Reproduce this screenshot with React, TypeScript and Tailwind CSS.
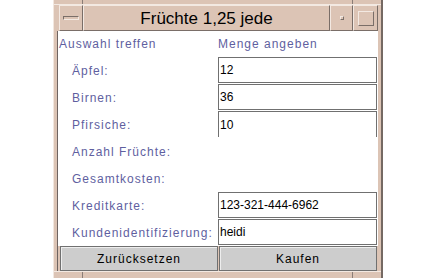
export default function App() {
  const font = "font-['Liberation_Sans',Arial,sans-serif]";
  const raised =
    "border border-t-[#f3e9e2] border-l-[#f3e9e2] border-b-[#7a6e68] border-r-[#7a6e68]";
  const label = "text-[12px] tracking-[1px] text-[#5f5f9f] leading-none";
  const field =
    "w-[159px] h-[26px] border border-[#707070] bg-white text-[12px] text-black leading-none flex items-center pl-[1px]";
  const button =
    "w-[158px] h-[25px] bg-[#cdcdcd] border border-[#707070] shadow-[inset_1px_1px_0_#eeeeee] text-[12px] tracking-[1px] text-black flex items-center justify-center leading-none";

  const rows: { label: string; value?: string; clipped?: boolean }[] = [
    { label: "Äpfel:", value: "12" },
    { label: "Birnen:", value: "36" },
    { label: "Pfirsiche:", value: "10", clipped: true },
    { label: "Anzahl Früchte:" },
    { label: "Gesamtkosten:" },
    { label: "Kreditkarte:", value: "123-321-444-6962" },
    { label: "Kundenidentifizierung:", value: "heidi" },
  ];

  return (
    <div className={`w-[431px] h-[278px] bg-white flex overflow-hidden ${font}`}>
      <div className="ml-[53px] w-[330px] h-[278px] bg-[#dcc4b5] border-l border-l-[#f2e7df] border-r-2 border-r-[#756963] flex flex-col">
        {/* top frame strip */}
        <div className="h-[5px] flex border-b border-b-[#f3e9e2]">
          <div className="w-[29px] border-r border-r-[#8a7d77]" />
          <div className="flex-1" />
          <div className="w-[29px] border-l border-l-[#8a7d77]" />
        </div>
        {/* title bar */}
        <div className="h-[26px] flex">
          <div className="w-[5px]" />
          <div className={`w-[24px] h-[26px] ${raised} flex items-center justify-center`}>
            <div className="w-[16px] h-[4px] border border-t-[#7a6e68] border-l-[#7a6e68] border-b-[#f3e9e2] border-r-[#f3e9e2]" />
          </div>
          <div className={`w-[247px] h-[26px] ${raised} flex items-center justify-center text-[17px] text-black leading-none`}>
            Früchte 1,25 jede
          </div>
          <div className={`w-[23px] h-[26px] ${raised} flex items-center justify-center`}>
            <div className="w-[4px] h-[4px] border border-t-[#f3e9e2] border-l-[#f3e9e2] border-b-[#7a6e68] border-r-[#7a6e68]" />
          </div>
          <div className={`w-[25px] h-[26px] ${raised} flex items-center justify-center`}>
            <div className="w-[16px] h-[15px] border border-t-[#f3e9e2] border-l-[#f3e9e2] border-b-[#7a6e68] border-r-[#7a6e68]" />
          </div>
        </div>
        {/* content */}
        <div className="flex">
          <div className="w-[3px]" />
          <div className="w-[321px] border-l border-l-[#6e6461] bg-white flex flex-col">
            <div className="h-[26px] flex items-center">
              <div className={`w-[160px] pl-[1px] ${label}`}>Auswahl treffen</div>
              <div className={`w-[160px] ${label}`}>Menge angeben</div>
            </div>
            {rows.map((r) => (
              <div key={r.label} className="h-[27px] flex">
                <div className={`w-[160px] pl-[14px] flex items-center ${label}`}>{r.label}</div>
                <div className="w-[160px]">
                  {r.value !== undefined && (
                    <div className={r.clipped ? `${field} h-[25px] border-b-0` : field}>{r.value}</div>
                  )}
                </div>
              </div>
            ))}
            <div className="h-[25px] flex bg-[#dcc4b5]">
              <div className="w-[160px] pl-[2px]">
                <div className={button}>Zurücksetzen</div>
              </div>
              <div className="w-[160px] pl-[1px]">
                <div className={button}>Kaufen</div>
              </div>
            </div>
          </div>
        </div>
        {/* bottom frame strip */}
        <div className="flex-1 flex border-t border-t-[#f3e9e2]">
          <div className="w-[29px] border-r border-r-[#8a7d77]" />
          <div className="flex-1" />
          <div className="w-[29px] border-l border-l-[#8a7d77]" />
        </div>
      </div>
    </div>
  );
}
